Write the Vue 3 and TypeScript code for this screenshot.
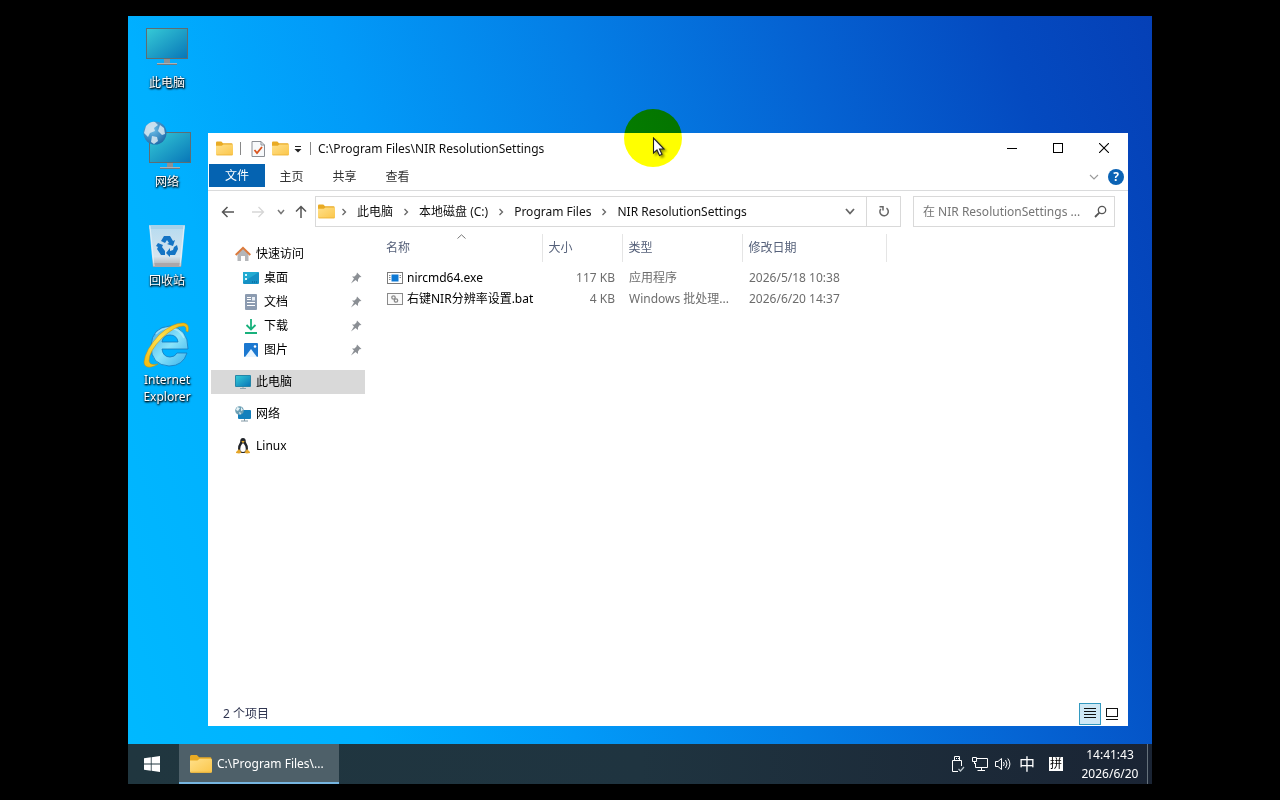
<script setup lang="ts">
import { ref } from 'vue'

interface Item { label: string; icon: string }
interface FileRow { name: string; size: string; type: string; date: string; icon: string }

const shortcuts: Item[] = [
  { label: '此电脑', icon: 'pc' },
  { label: '网络', icon: 'net' },
  { label: '回收站', icon: 'bin' },
  { label: 'Internet Explorer', icon: 'ie' },
]
const tabs: string[] = ['主页', '共享', '查看']
const crumbs: string[] = ['此电脑', '本地磁盘 (C:)', 'Program Files', 'NIR ResolutionSettings']
const pinned: Item[] = [
  { label: '桌面', icon: 'desktop' },
  { label: '文档', icon: 'doc' },
  { label: '下载', icon: 'down' },
  { label: '图片', icon: 'pic' },
]
const files: FileRow[] = [
  { name: 'nircmd64.exe', size: '117 KB', type: '应用程序', date: '2026/5/18 10:38', icon: 'exe' },
  { name: '右键NIR分辨率设置.bat', size: '4 KB', type: 'Windows 批处理...', date: '2026/6/20 14:37', icon: 'bat' },
]
const query = ref('')
</script>

<template>
  <div class="screen">
    <svg class="defs" aria-hidden="true">
      <defs>
        <linearGradient id="gScreen" x1="0" y1="0" x2="1" y2="1">
          <stop offset="0" stop-color="#35c9d6" /><stop offset="1" stop-color="#0877b8" />
        </linearGradient>
        <linearGradient id="gFolder" x1="0" y1="0" x2="1" y2="1">
          <stop offset="0" stop-color="#ffe08a" /><stop offset="1" stop-color="#fbc64a" />
        </linearGradient>
        <linearGradient id="gBin" x1="0" y1="0" x2="0" y2="1">
          <stop offset="0" stop-color="#b5dbf0" /><stop offset="0.75" stop-color="#d5e4ee" /><stop offset="1" stop-color="#a9a9ab" />
        </linearGradient>
        <linearGradient id="gIe" x1="0" y1="0" x2="1" y2="1">
          <stop offset="0" stop-color="#3ba9e6" /><stop offset="0.5" stop-color="#8be4fb" /><stop offset="1" stop-color="#36b0ea" />
        </linearGradient>
        <linearGradient id="gRing" x1="0" y1="1" x2="1" y2="0">
          <stop offset="0" stop-color="#f3b90c" /><stop offset="0.5" stop-color="#ffe251" /><stop offset="1" stop-color="#f0b90e" />
        </linearGradient>
        <radialGradient id="gGlobe" cx="0.4" cy="0.35" r="0.7">
          <stop offset="0" stop-color="#6fc0ea" /><stop offset="1" stop-color="#1d69a8" />
        </radialGradient>
        <symbol id="folder" viewBox="0 0 16 14">
          <path d="M0 1.6Q0 .5 1 .5H5L6.6 2H14.6Q15.6 2 15.6 3V6H0Z" fill="#e9ab24" />
          <path d="M0 4.4H5.4L7 3.2H15Q16 3.2 16 4.2V12.4Q16 13.4 15 13.4H1Q0 13.4 0 12.4Z" fill="url(#gFolder)" />
          <path d="M.5 13H15.5" stroke="#eeb73d" stroke-width=".8" />
        </symbol>
        <symbol id="monitor" viewBox="0 0 44 40">
          <path d="M19 32H25V36H19Z" fill="#8a9297" />
          <path d="M12 36H32V38H12Z" fill="#707b82" />
          <path d="M12 36H32V36.8H12Z" fill="#b8c2c8" />
          <rect x="1" y="1" width="42" height="31" fill="#5f6d72" />
          <rect x="2" y="2" width="40" height="29" fill="url(#gScreen)" />
        </symbol>
      </defs>
    </svg>

    <main class="desktop">
      <div class="workspace">
        <nav class="shortcuts" aria-label="桌面图标">
          <button v-for="s in shortcuts" :key="s.icon" type="button" class="shortcut">
            <svg v-if="s.icon === 'pc'" width="48" height="48" viewBox="0 0 48 48">
              <use href="#monitor" x="2" y="4" width="44" height="40" />
            </svg>
            <svg v-else-if="s.icon === 'net'" width="48" height="48" viewBox="0 0 48 48">
              <use href="#monitor" x="5" y="9" width="44" height="40" />
              <circle cx="12" cy="11" r="11.5" fill="url(#gGlobe)" />
              <path d="M3 4Q8-1 12 0L15 3L11 6L12 9L7 11L5 15L1 11ZM17 3L21 6L22 12L19 13L15 9ZM9 14L14 15L15 19L11 22L8 20Z" fill="#dceaf2" opacity=".85" />
            </svg>
            <svg v-else-if="s.icon === 'bin'" width="48" height="48" viewBox="0 0 48 48">
              <path d="M6 4H42L38 46H10Z" fill="url(#gBin)" />
              <path d="M6 4H42L41.6 8H6.4Z" fill="#a6d2ea" />
              <path d="M10 42H38.4L38 46H10Z" fill="#aaa7aa" />
              <path d="M7 5L11 45M41 5L37 45" stroke="#e9f4fa" stroke-width=".8" fill="none" />
              <g fill="#1474c4">
                <path d="M18 20L21 15H27L30 20L32 19L30 25L24 23L26 22L24 19L22 22Z" />
                <path d="M15 22L20 24L19 26L22 30V34H18L14 28L15 26L13 25Z" />
                <path d="M34 24L35 28L32 34H27V36L23 32L27 27V30L30 29L31 26Z" />
              </g>
            </svg>
            <svg v-else width="48" height="48" viewBox="0 0 48 48">
              <path d="M45 29H19Q20 37 27 37Q32 37 34 33H44Q40 46 26 46Q8 45 8 26Q9 7 27 6Q45 8 45 29ZM19 22H35Q34 15 27 15Q20 15 19 22Z" fill="url(#gIe)" stroke="#1479bd" stroke-width=".8" />
              <path d="M13 14Q18 8 27 8Q37 9 41 18" fill="none" stroke="#b9f0ff" stroke-width="1.500" opacity=".7" />
              <path d="M45 12Q47 4 41 3Q30 2 16 15Q2 30 1 42Q1 48 8 47Q12 46 15 44Q7 46 6 41Q6 31 19 18Q33 5 41 6Q44 7 43 11Z" fill="url(#gRing)" stroke="#c88a08" stroke-width=".5" />
            </svg>
            <span>{{ s.label }}</span>
          </button>
        </nav>

        <section class="window" aria-label="NIR ResolutionSettings">
          <header class="titlebar">
            <svg width="17" height="15"><use href="#folder" /></svg>
            <i class="bar"></i>
            <button type="button" class="plain check" aria-label="属性">
              <svg width="14" height="16" viewBox="0 0 14 16">
                <path d="M1 .5H10L13.500 4V15.500H1Z" fill="#f7f9fb" stroke="#8b8f96" />
                <path d="M10 .5V4H13.500" fill="none" stroke="#8b8f96" />
                <path d="M3.500 9L6 12L11 6" fill="none" stroke="#d9541e" stroke-width="1.800" />
              </svg>
            </button>
            <button type="button" class="plain" aria-label="新建文件夹"><svg width="17" height="15"><use href="#folder" /></svg></button>
            <button type="button" class="plain drop" aria-label="自定义快速访问工具栏">
              <svg width="8" height="8" viewBox="0 0 8 8"><path d="M1 1.500H7" stroke="#222" /><path d="M.5 4H7.500L4 7.500Z" fill="#222" /></svg>
            </button>
            <i class="bar second"></i>
            <h1>C:\Program Files\NIR ResolutionSettings</h1>
            <div class="controls">
              <button type="button" aria-label="最小化"><svg width="10" height="10" viewBox="0 0 10 10"><path d="M0 5.500H10" stroke="#000" /></svg></button>
              <button type="button" aria-label="最大化"><svg width="10" height="10" viewBox="0 0 10 10"><rect x=".5" y=".5" width="9" height="9" fill="none" stroke="#000" /></svg></button>
              <button type="button" aria-label="关闭"><svg width="10" height="10" viewBox="0 0 10 10"><path d="M0 0L10 10M10 0L0 10" stroke="#000" stroke-width="1.100" /></svg></button>
            </div>
          </header>

          <div class="ribbon">
            <button type="button" class="file">文件</button>
            <button v-for="t in tabs" :key="t" type="button" class="tab">{{ t }}</button>
            <button type="button" class="plain expand" aria-label="展开功能区">
              <svg width="10" height="6" viewBox="0 0 10 6"><path d="M1 1L5 5L9 1" fill="none" stroke="#9a9a9a" stroke-width="1.100" /></svg>
            </button>
            <button type="button" class="help" aria-label="帮助">?</button>
          </div>

          <div class="navrow">
            <button type="button" class="plain back" aria-label="后退">
              <svg width="14" height="12" viewBox="0 0 14 12"><path d="M13 6H2M6.500 1L1.500 6L6.500 11" fill="none" stroke="#555" stroke-width="1.500" /></svg>
            </button>
            <button type="button" class="plain fwd" aria-label="前进">
              <svg width="14" height="12" viewBox="0 0 14 12"><path d="M1 6H12M7.500 1L12.500 6L7.500 11" fill="none" stroke="#d6d6d6" stroke-width="1.300" /></svg>
            </button>
            <button type="button" class="plain recent" aria-label="最近位置">
              <svg width="8" height="6" viewBox="0 0 8 6"><path d="M1 1L4 4.500L7 1" fill="none" stroke="#777" stroke-width="1.500" /></svg>
            </button>
            <button type="button" class="plain" aria-label="上移">
              <svg width="12" height="13" viewBox="0 0 12 13"><path d="M6 13V2M1 6.500L6 1.500L11 6.500" fill="none" stroke="#555" stroke-width="1.500" /></svg>
            </button>
            <div class="address">
              <svg class="root" width="17" height="15"><use href="#folder" /></svg>
              <span v-for="c in crumbs" :key="c" class="crumb">
                <svg width="6" height="8" viewBox="0 0 6 8"><path d="M1.500 1L4.500 4L1.500 7" fill="none" stroke="#666" stroke-width="1.300" /></svg>
                <a href="#">{{ c }}</a>
              </span>
              <button type="button" class="plain history" aria-label="以前的位置">
                <svg width="10" height="7" viewBox="0 0 10 7"><path d="M1 1L5 5.500L9 1" fill="none" stroke="#666" stroke-width="1.800" /></svg>
              </button>
              <button type="button" class="plain refresh" aria-label="刷新">
                <svg width="12" height="13" viewBox="0 0 12 13"><path d="M8.500 3.200A4.200 4.200 0 1 1 2.800 4" fill="none" stroke="#666" stroke-width="1.500" /><path d="M1.500 1.800H5V5.500" fill="none" stroke="#666" stroke-width="1.500" /></svg>
              </button>
            </div>
            <label class="search">
              <input v-model="query" type="text" placeholder="在 NIR ResolutionSettings ..." aria-label="搜索" />
              <svg width="13" height="13" viewBox="0 0 13 13"><circle cx="8" cy="5" r="3.700" fill="none" stroke="#555" stroke-width="1.300" /><path d="M5.400 7.600L1 12" stroke="#555" stroke-width="1.800" /></svg>
            </label>
          </div>

          <div class="body">
            <nav class="tree" aria-label="导航窗格">
              <a href="#" class="node">
                <svg width="16" height="16" viewBox="0 0 16 16"><path d="M2.500 7L8 2L13.500 7V15H10V10H6V15H2.500Z" fill="#b4b6b9" /><path d="M6 10H10V15H6Z" fill="#fff" /><path d="M.7 9L8 1.800L15.300 9" fill="none" stroke="#dc7a3c" stroke-width="2" /></svg>
                <span>快速访问</span>
              </a>
              <a v-for="p in pinned" :key="p.icon" href="#" class="node child">
                <svg v-if="p.icon === 'desktop'" width="16" height="16" viewBox="0 0 16 16"><rect y="2" width="16" height="12" rx="1" fill="#1590c4" /><path d="M0 12V3Q0 2 1 2H16Z" fill="#22abd2" /><path d="M2 4H4V6H2ZM2 8H4V10H2Z" fill="#d8f5fb" /><path d="M9 12H15" stroke="#075b8b" stroke-dasharray="1 1" /></svg>
                <svg v-else-if="p.icon === 'doc'" width="16" height="16" viewBox="0 0 16 16"><rect x="2" width="12" height="16" rx="1" fill="#8c9bb0" /><path d="M4 3.500H8M4 5.500H8M4 8.500H12M4 11.500H12" stroke="#fff" stroke-width="1.200" /><path d="M9 3H12V6.500H9Z" fill="#e7edf4" /></svg>
                <svg v-else-if="p.icon === 'down'" width="16" height="16" viewBox="0 0 16 16"><path d="M8 1V11M3.500 7L8 11.500L12.500 7M2 15H14" fill="none" stroke="#18b17c" stroke-width="1.800" /></svg>
                <svg v-else width="16" height="16" viewBox="0 0 16 16"><rect x="1" y="1" width="14" height="14" rx="1" fill="#1b78d0" /><path d="M2 15L8 7L14 15Z" fill="#e8f5ff" /><circle cx="12" cy="4.500" r="1.300" fill="#fff" /></svg>
                <span>{{ p.label }}</span>
                <svg class="pin" width="12" height="12" viewBox="0 0 12 12"><path d="M7 .5L11.500 5L9.500 5.300L8 7.500V10L5.500 8L1 11.500L4 6.500L2 4.500H4.500L6.500 2.500Z" fill="#8b8f94" /></svg>
              </a>
              <a href="#" class="node group current">
                <svg width="16" height="16" viewBox="0 0 16 16"><rect y="1" width="16" height="12" rx="1" fill="#2586a8" /><rect x="1" y="2" width="14" height="10" fill="url(#gScreen)" /><path d="M5 14.500H11M8 13V14" stroke="#8da4af" /></svg>
                <span>此电脑</span>
              </a>
              <a href="#" class="node group">
                <svg width="16" height="16" viewBox="0 0 16 16"><rect x="3" y="4" width="13" height="9" rx="1" fill="#1380bd" /><path d="M6 15H13M9.500 13V15" stroke="#8198a5" /><circle cx="4.500" cy="4.500" r="4.300" fill="#6c9fb4" /><path d="M2 1L5 2L3 5L1 4ZM6 1L8 4L6 5ZM4 6L6 7L5 9Z" fill="#e4f2f6" /></svg>
                <span>网络</span>
              </a>
              <a href="#" class="node group">
                <svg width="16" height="16" viewBox="0 0 16 16"><path d="M8 0Q11 0 10.800 4Q13.500 8 13 11.500L12 15H4L3 11.500Q2.500 8 5.200 4Q5 0 8 0Z" fill="#22252a" /><path d="M8 5Q11.500 8 10.500 13Q8 15 5.500 13Q4.500 8 8 5Z" fill="#fff" /><path d="M6.300 3.500L8 2.800L9.700 3.500L8 5Z" fill="#efb32c" /><path d="M1 14L4 11L6.500 14.500Q5 16 1 15ZM15 14L12 11L9.500 14.500Q11 16 15 15Z" fill="#e5a62a" /></svg>
                <span>Linux</span>
              </a>
            </nav>

            <div class="content">
              <svg class="sort" width="9" height="5" viewBox="0 0 9 5"><path d="M.5 4.500L4.500 .8L8.500 4.500" fill="none" stroke="#777" /></svg>
              <table>
                <thead>
                  <tr><th class="cname">名称</th><th class="csize">大小</th><th class="ctype">类型</th><th class="cdate">修改日期</th></tr>
                </thead>
                <tbody>
                  <tr v-for="f in files" :key="f.name">
                    <td class="name">
                      <div class="cell">
                        <svg v-if="f.icon === 'exe'" width="16" height="12" viewBox="0 0 16 12"><rect x=".5" y=".5" width="15" height="11" fill="#fff" stroke="#7b7b7b" /><rect x="4.500" y="2.500" width="7" height="7" fill="#0c78d4" /><path d="M2 3.500H3.500M2 5.500H3.500M2 7.500H3.500M12.500 3.500H14M12.500 5.500H14" stroke="#888" /></svg>
                        <svg v-else width="16" height="12" viewBox="0 0 16 12"><rect x=".5" y=".5" width="15" height="11" fill="#fafafa" stroke="#8a8a8a" /><circle cx="6.500" cy="4.500" r="1.700" fill="none" stroke="#8a8a8a" stroke-width="1.300" /><circle cx="9" cy="7.500" r="1.700" fill="none" stroke="#8a8a8a" stroke-width="1.300" /></svg>
                        <span>{{ f.name }}</span>
                      </div>
                    </td>
                    <td class="size">{{ f.size }}</td>
                    <td>{{ f.type }}</td>
                    <td>{{ f.date }}</td>
                  </tr>
                </tbody>
              </table>
            </div>
          </div>

          <footer class="status">
            <span>2 个项目</span>
            <button type="button" class="view on" aria-label="详细信息"><svg width="12" height="11" viewBox="0 0 12 11"><path d="M0 .5H12M0 3.500H12M0 6.500H12M0 9.500H12" stroke="#111" /></svg></button>
            <button type="button" class="view" aria-label="大图标"><svg width="12" height="12" viewBox="0 0 12 12"><rect x=".5" y=".5" width="11" height="8" fill="none" stroke="#111" /><path d="M0 11.500H12" stroke="#111" /></svg></button>
          </footer>
        </section>

        <div class="halo"></div>
        <svg class="pointer" width="16" height="22" viewBox="0 0 16 22"><path d="M1.500 1V16L5 13L7.500 18.500L10 17.300L7.500 12H12Z" fill="#fff" stroke="#222" stroke-width="1.100" /></svg>
      </div>

      <footer class="taskbar">
        <button type="button" class="start" aria-label="开始">
          <svg width="16" height="16" viewBox="0 0 16 16"><path d="M0 2.300L6.800 1.300V7.600H0ZM7.600 1.200L16 0V7.600H7.600ZM0 8.400H6.800V14.700L0 13.700ZM7.600 8.400H16V16L7.600 14.800Z" fill="#fff" /></svg>
        </button>
        <button type="button" class="task">
          <svg width="22" height="20"><use href="#folder" /></svg>
          <span>C:\Program Files\...</span>
        </button>
        <div class="tray">
          <svg width="14" height="18" viewBox="0 0 14 18"><path d="M3.500 5.500V1.500H8.500V5.500M1.500 5.500H10.500V11M1.500 5.500V16.500H7" fill="none" stroke="#fff" /><path d="M5.500 3V4M7.500 3V4" stroke="#fff" /><path d="M7.500 14L9.500 16L13 12" fill="none" stroke="#b9c4ca" stroke-width="1.200" /></svg>
          <svg width="16" height="16" viewBox="0 0 16 16"><path d="M5 2.500H15.500V11.500H3.500V7M9.500 11.500V14.500M5.500 14.500H13" fill="none" stroke="#fff" /><path d="M.5 1.500H4.500V5.500H.5ZM2.500 5V8" fill="none" stroke="#fff" /></svg>
          <svg width="17" height="14" viewBox="0 0 17 14"><path d="M.5 4.500H3L6.500 1.500V12.500L3 9.500H.5Z" fill="none" stroke="#fff" /><path d="M8.500 5Q10 7 8.500 9M10.500 3Q13.500 7 10.500 11M12.800 1.500Q17 7 12.800 12.500" fill="none" stroke="#fff" /></svg>
          <span class="lang">中</span>
          <span class="ime">拼</span>
        </div>
        <div class="clock"><span>14:41:43</span><span>2026/6/20</span></div>
        <button type="button" class="peek" aria-label="显示桌面"></button>
      </footer>
    </main>
  </div>
</template>

<style>
body { background: #000; }
</style>

<style scoped>
.screen {
  box-sizing: border-box;
  height: 100vh;
  padding: 16px 10%;
  background: #000;
  color: #111;
  font: 12px/16px "Noto Sans", "Noto Sans CJK SC", sans-serif;
}
.screen *, .screen *::before { box-sizing: border-box; }
.defs { position: absolute; width: 0; height: 0; }
svg { display: block; flex: none; }
button, input { margin: 0; padding: 0; border: 0; background: none; font: inherit; color: inherit; }
a { color: inherit; text-decoration: none; }
.plain { display: flex; align-items: center; justify-content: center; }

.desktop {
  display: flex;
  flex-direction: column;
  isolation: isolate;
  height: 100%;
  background: linear-gradient(71deg, #00b9ff 0%, #00b0ff 20%, #029af8 36%, #047fe6 54%, #0562d2 72%, #044ac0 88%, #0540b6 100%);
}
.workspace { position: relative; flex: 1; }

.shortcuts { display: flex; flex-direction: column; width: 78px; padding-top: 7px; }
.shortcut {
  display: flex;
  flex-direction: column;
  align-items: center;
  justify-content: flex-start;
  gap: 3px;
  height: 99px;
  color: #fff;
  line-height: 17px;
  text-shadow: 1px 1px 2px #000, 0 1px 2px #000;
}
.shortcut svg { overflow: visible; }
.shortcut span { width: 64px; text-align: center; }

.window {
  position: absolute;
  inset: 117px 24px 18px 80px;
  display: flex;
  flex-direction: column;
  background: #fff;
}
.titlebar { display: flex; align-items: center; height: 31px; padding-left: 8px; }
.bar { width: 1px; height: 13px; margin-left: 7px; background: #888; }
.bar.second { margin-left: 8px; }
.check { margin: 0 7px 0 10px; }
.drop { margin-left: 5px; }
h1 { margin: 0 0 0 7px; font-size: 12px; font-weight: 400; }
.controls { display: flex; align-self: stretch; margin-left: auto; padding: 0 1px 1px 0; }
.controls button { display: flex; align-items: center; justify-content: center; width: 46px; }

.ribbon { display: flex; align-items: flex-start; height: 27px; padding: 0 4px 0 1px; border-bottom: 1px solid #dadbdc; }
.file { width: 56px; height: 23px; background: #0563b1; color: #fff; }
.tab { width: 53px; height: 25px; color: #333; }
.expand { width: 18px; height: 26px; margin-left: auto; }
.help { width: 16px; height: 16px; margin: 5px 0 0 5px; border-radius: 50%; background: #0b63b5; color: #fff; font-weight: 700; }

.navrow { display: flex; align-items: center; height: 41px; padding: 0 13px; }
.back { margin-right: 16px; }
.recent { width: 18px; margin: 0 5px 0 7px; }
.address { display: flex; flex: 1; align-items: center; height: 31px; margin-left: 8px; padding-left: 2px; border: 1px solid #d9d9d9; }
.root { margin-right: 6px; }
.crumb { display: flex; align-items: center; gap: 10px; margin-right: 10px; }
.history { width: 32px; height: 29px; margin-left: auto; }
.refresh { width: 34px; height: 29px; border-left: 1px solid #d9d9d9; }
.search { display: flex; align-items: center; width: 202px; height: 31px; margin-left: 12px; padding: 0 7px 0 9px; border: 1px solid #d9d9d9; }
.search input { flex: 1; min-width: 0; outline: 0; }
.search input::placeholder { color: #757575; opacity: 1; }

.body { display: flex; flex: 1; min-height: 0; }
.tree { width: 157px; padding: 10px 0 0 3px; color: #000; }
.node { display: flex; align-items: center; gap: 5px; height: 24px; padding-left: 24px; }
.child { padding-left: 32px; }
.pin { margin: 0 3px 0 auto; }
.group { margin-top: 8px; }
.current { background: #d9d9d9; }

.content { position: relative; flex: 1; padding: 2px 0 0 15px; }
.sort { position: absolute; top: 2px; left: 92px; }
table { border-collapse: collapse; table-layout: fixed; width: 506px; }
th { height: 28px; padding: 0 0 0 6px; border-right: 1px solid #e5e5e5; color: #56617a; font-weight: 400; text-align: left; }
.cname { width: 162px; }
.csize { width: 80px; }
.ctype { width: 120px; }
.cdate { width: 144px; }
td { height: 21px; padding: 0 0 0 7px; color: #6d6d6d; white-space: nowrap; }
tbody::before { content: ""; display: block; height: 5px; }
td.name { color: #000; }
.cell { display: flex; align-items: center; gap: 4px; }
td.size { padding-right: 7px; text-align: right; }

.status { display: flex; align-items: center; height: 25px; padding: 0 5px 0 15px; color: #2f3550; }
.view { display: flex; align-items: center; justify-content: center; width: 22px; height: 22px; }
.view.on { margin-left: auto; border: 1px solid #3399c0; background: #cfe8f5; }

.halo { position: absolute; top: 93px; left: 496px; width: 58px; height: 58px; border-radius: 50%; background: #ff0; mix-blend-mode: multiply; }
.pointer { position: absolute; top: 121px; left: 524px; filter: drop-shadow(2px 2px 1px rgba(0, 0, 0, 0.4)); }

.taskbar { display: flex; align-items: stretch; height: 40px; background: linear-gradient(90deg, #20363f, #1f3440 50%, #1a2434); color: #fff; }
.start { display: flex; align-items: center; justify-content: center; width: 48px; margin-right: 3px; }
.task { display: flex; align-items: center; gap: 5px; width: 160px; padding: 0 11px; background: #4e6069; box-shadow: inset 0 -2px #76b5e0; }
.tray { display: flex; align-items: center; gap: 7px; margin-left: auto; }
.lang { width: 16px; font-size: 16px; }
.ime { width: 14px; height: 14px; margin-left: 7px; background: #fff; color: #000; line-height: 14px; text-align: center; }
.clock { display: flex; flex-direction: column; justify-content: center; width: 74px; margin-left: 10px; line-height: 19px; text-align: center; }
.peek { width: 5px; border-left: 1px solid #65717b; }
</style>
